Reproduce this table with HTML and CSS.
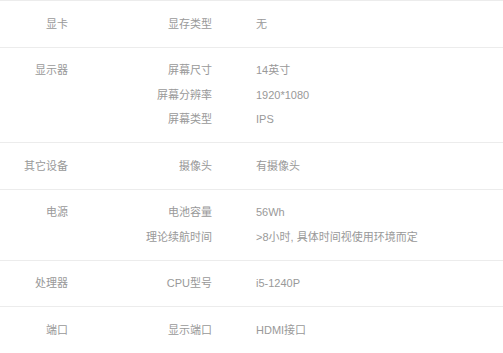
FILE: index.html
```html
<!DOCTYPE html>
<html lang="zh-CN">
<head>
<meta charset="utf-8">
<link rel="stylesheet" href="styles.css">
</head>
<body>
<div class="spec">
  <div class="row">
    <div class="cat">显卡</div>
    <div class="items">
      <div class="item"><span class="k">显存类型</span><span class="v">无</span></div>
    </div>
  </div>
  <div class="row">
    <div class="cat">显示器</div>
    <div class="items">
      <div class="item"><span class="k">屏幕尺寸</span><span class="v">14英寸</span></div>
      <div class="item"><span class="k">屏幕分辨率</span><span class="v">1920*1080</span></div>
      <div class="item"><span class="k">屏幕类型</span><span class="v">IPS</span></div>
    </div>
  </div>
  <div class="row">
    <div class="cat">其它设备</div>
    <div class="items">
      <div class="item"><span class="k">摄像头</span><span class="v">有摄像头</span></div>
    </div>
  </div>
  <div class="row">
    <div class="cat">电源</div>
    <div class="items">
      <div class="item"><span class="k">电池容量</span><span class="v">56Wh</span></div>
      <div class="item"><span class="k">理论续航时间</span><span class="v">&gt;8小时, 具体时间视使用环境而定</span></div>
    </div>
  </div>
  <div class="row">
    <div class="cat">处理器</div>
    <div class="items">
      <div class="item"><span class="k">CPU型号</span><span class="v">i5-1240P</span></div>
    </div>
  </div>
  <div class="row last">
    <div class="cat">端口</div>
    <div class="items">
      <div class="item"><span class="k">显示端口</span><span class="v">HDMI接口</span></div>
    </div>
  </div>
</div>
</body>
</html>
```
FILE: styles.css
```css
html, body {
  margin: 0;
  padding: 0;
  background: #fff;
}
body {
  font-family: "Liberation Sans", "Noto Sans CJK SC", sans-serif;
  font-size: 11px;
  color: #999;
}
.spec {
  width: 503px;
}
.row {
  display: grid;
  grid-template-columns: 68px 1fr;
  border-top: 1px solid #ececec;
  padding: 10.5px 0;
  line-height: 24.5px;
}
.row.last {
  border-bottom: 1px solid #ececec;
}
.cat {
  text-align: right;
}
.item {
  display: grid;
  grid-template-columns: 144px 1fr;
}
.k {
  text-align: right;
}
.v {
  padding-left: 44px;
}
```
